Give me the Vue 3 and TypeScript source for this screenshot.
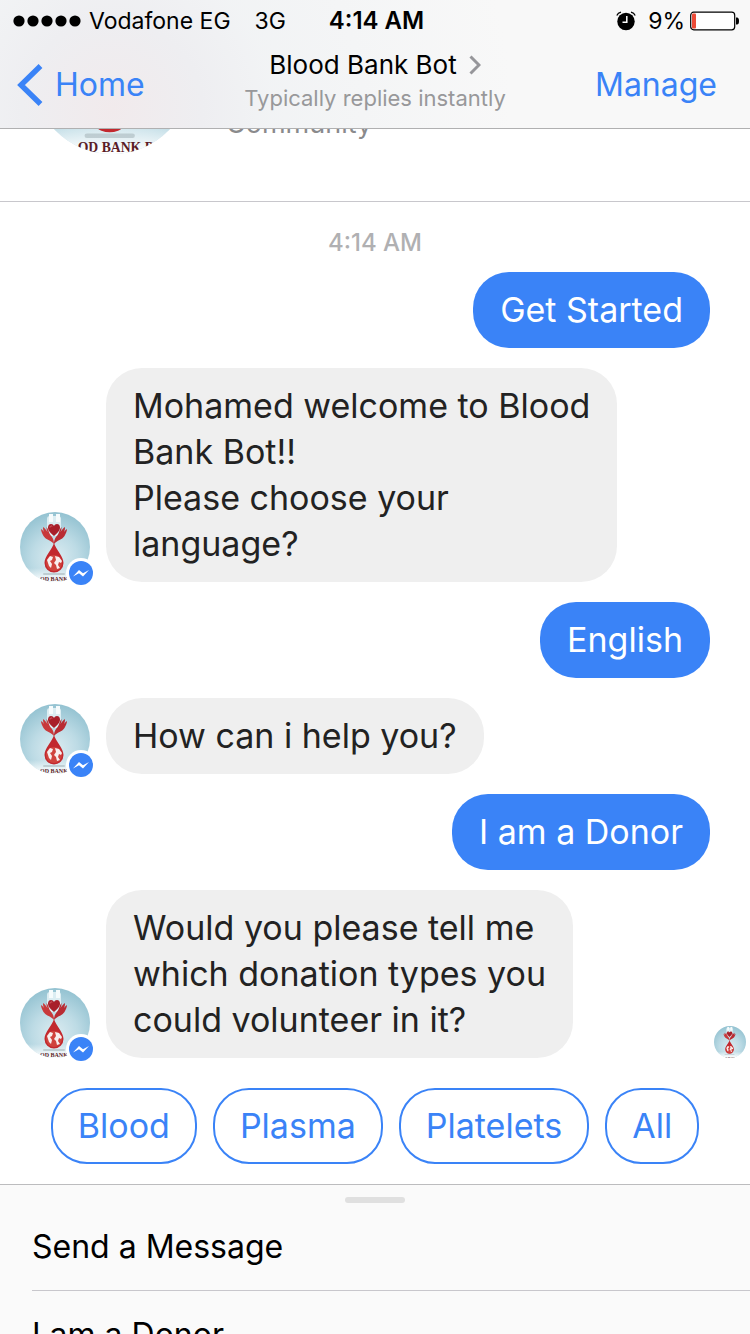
<script setup lang="ts">
import { defineComponent, h } from 'vue'

interface Message {
  id: number
  from: 'me' | 'bot'
  text: string
  seen?: boolean
}

const messages: Message[] = [
  { id: 1, from: 'me', text: 'Get Started' },
  { id: 2, from: 'bot', text: 'Mohamed welcome to Blood\nBank Bot!!\nPlease choose your\nlanguage?' },
  { id: 3, from: 'me', text: 'English' },
  { id: 4, from: 'bot', text: 'How can i help you?' },
  { id: 5, from: 'me', text: 'I am a Donor' },
  { id: 6, from: 'bot', text: 'Would you please tell me\nwhich donation types you\ncould volunteer in it?', seen: true },
]

const replies: string[] = ['Blood', 'Plasma', 'Platelets', 'All']
const menu: string[] = ['Send a Message', 'I am a Donor']

/* Round page picture: a heart held by two hands over a globe in a drop of blood. */
const hand =
  'M34 32 C31 28 26 28 23.500 24 C22 21 21 19 21 17 C23 18 24 20 25.500 22 C23 19 23 17 23 15 C25 16 26 18 27.500 20 C26.500 18 26.500 16 26.500 15 C28.500 17 28.500 20 30 22.500 C32 25 34 27 34 32 Z'

const BotAvatar = defineComponent({
  props: { uid: { type: String, required: true } },
  setup(props) {
    return () =>
      h('svg', { viewBox: '0 0 70 70', role: 'img', 'aria-label': 'Blood Bank Bot' }, [
        h('defs', [
          h('clipPath', { id: `c-${props.uid}` }, [h('circle', { cx: 35, cy: 35, r: 35 })]),
          h('radialGradient', { id: `g-${props.uid}`, cx: '0.5', cy: '0.65', r: '0.65' }, [
            h('stop', { offset: '0', 'stop-color': '#dcecf1' }),
            h('stop', { offset: '0.5', 'stop-color': '#bddbe5' }),
            h('stop', { offset: '1', 'stop-color': '#93c2d1' }),
          ]),
          h('linearGradient', { id: `f-${props.uid}`, x1: 0, y1: 0, x2: 0, y2: 1 }, [
            h('stop', { offset: '0', 'stop-color': '#ffffff', 'stop-opacity': 0 }),
            h('stop', { offset: '0.9', 'stop-color': '#ffffff' }),
          ]),
        ]),
        h('g', { 'clip-path': `url(#c-${props.uid})` }, [
          h('rect', { width: 70, height: 70, fill: `url(#g-${props.uid})` }),
          h('rect', { y: 56, width: 70, height: 14, fill: `url(#f-${props.uid})` }),
          h('rect', { x: 27, y: 4, width: 14, height: 20, rx: 3, fill: '#dcedf2' }),
          h('path', { d: 'M29 2h4v8h-4z M36 2h4v8h-4z', fill: '#f6fbfc' }),
          h('path', { d: hand, fill: '#c8393b' }),
          h('path', { d: hand, fill: '#b92c33', transform: 'matrix(-1 0 0 1 68 0)' }),
          h('path', {
            d: 'M34 24 C31 21 28 19 28 15.500 C28 11 33 11 34 14 C35 11 40 11 40 15.500 C40 19 37 21 34 24 Z',
            fill: '#a81f2a',
          }),
          h('path', { d: 'M30 15.500 C30 13.500 32 13.500 32 14.500', stroke: '#d9666a', fill: 'none' }),
          h('rect', { x: 23, y: 61, width: 22, height: 2, rx: 1, fill: '#a9b8bd', opacity: 0.6 }),
          h('path', {
            d: 'M34 31 C36 38 43.500 44 43.500 51 A9.500 9.500 0 0 1 24.500 51 C24.500 44 32 38 34 31 Z',
            fill: '#c2282e',
          }),
          h('circle', { cx: 34, cy: 51, r: 8, fill: '#d0433d' }),
          h('path', {
            d: 'M27 48 L30 44 L33 45 L32 48 L30 49 L32 52 L31 56 L29 54 L28 51 Z M35 44 L39 45 L42 49 L41 51 L39 50 L38 53 L40 56 L37 57 L36 53 L34 51 L36 48 Z',
            fill: '#f8eeee',
          }),
          h(
            'text',
            {
              x: 20,
              y: 69,
              'font-family': '"Liberation Serif", serif',
              'font-size': 6,
              'font-weight': 700,
              fill: '#5a1c26',
            },
            'OD BANK B',
          ),
        ]),
      ])
  },
})
</script>

<template>
  <div class="phone">
    <header class="top">
      <div class="status">
        <div class="status-left">
          <svg class="dots" viewBox="0 0 68 12" aria-hidden="true">
            <circle v-for="n in 5" :key="n" :cx="n * 14 - 8" cy="6" r="5.6" />
          </svg>
          <span>Vodafone EG</span>
          <span class="net">3G</span>
        </div>
        <strong class="clock">4:14 AM</strong>
        <div class="status-right">
          <svg class="alarm" viewBox="0 0 20 20" aria-hidden="true">
            <circle cx="10" cy="10.500" r="8.700" />
            <path d="M.800 4.500 Q2 2 5 1.200 M19.200 4.500 Q18 2 15 1.200" fill="none" stroke="#000" stroke-width="1.300" />
            <path d="M10.800 5 V11.200 H6.500" fill="none" stroke="#fff" stroke-width="1.500" />
          </svg>
          <span>9%</span>
          <svg class="battery" viewBox="0 0 50 20" aria-hidden="true">
            <rect x="0.700" y="1.200" width="44" height="17.600" rx="3" fill="#fff" stroke="#000" stroke-width="1.200" />
            <rect x="2" y="2.500" width="4" height="15" rx="1" fill="#ec4b37" />
            <path d="M46 6.500h1q2 0 2 3.500t-2 3.500h-1z" />
          </svg>
        </div>
      </div>
      <nav class="nav">
        <button class="link back" type="button">
          <svg viewBox="0 0 26 42" aria-hidden="true">
            <path d="M23.500 2 L4 21 L23.500 40" fill="none" stroke="currentColor" stroke-width="5.400" />
          </svg>
          Home
        </button>
        <div class="heading">
          <h1 class="title">
            Blood Bank Bot
            <svg viewBox="0 0 12 20" aria-hidden="true">
              <path d="M1.500 1.500 L10 10 L1.500 18.500" fill="none" stroke="#96969a" stroke-width="3" />
            </svg>
          </h1>
          <p class="subtitle">Typically replies instantly</p>
        </div>
        <button class="link manage" type="button">Manage</button>
      </nav>
    </header>

    <section class="profile">
      <BotAvatar class="profile-pic" uid="profile" />
      <p class="category">Community</p>
    </section>

    <main class="chat">
      <time class="stamp">4:14 AM</time>
      <div v-for="m in messages" :key="m.id" class="row" :class="m.from">
        <div v-if="m.from === 'bot'" class="sender">
          <BotAvatar class="sender-pic" :uid="`m${m.id}`" />
          <svg class="badge" viewBox="0 0 30 30" aria-hidden="true">
            <circle cx="15" cy="15" r="15" fill="#fff" />
            <circle cx="15" cy="15" r="12" fill="#3a83f7" />
            <path d="M7 18.500 L13 12 L17 15.300 L23 12 L17 18.500 L13 15.300 Z" fill="#fff" />
          </svg>
        </div>
        <p class="bubble">{{ m.text }}</p>
        <BotAvatar v-if="m.seen" class="seen" uid="seen" />
      </div>
      <div class="replies">
        <button v-for="r in replies" :key="r" class="chip" type="button">{{ r }}</button>
      </div>
    </main>

    <footer class="sheet">
      <div class="grip"></div>
      <button v-for="item in menu" :key="item" class="item" type="button">{{ item }}</button>
    </footer>
  </div>
</template>

<style>
body {
  margin: 0;
  background: #fff;
}
</style>

<style scoped>
.phone {
  height: 100vh;
  display: flex;
  flex-direction: column;
  overflow: hidden;
  background: #fff;
  color: #000;
  font-family: Inter, "Liberation Sans", sans-serif;
}
.phone > * {
  flex-shrink: 0;
}
p,
h1 {
  margin: 0;
  font-weight: 400;
}
button {
  margin: 0;
  padding: 0;
  border: 0;
  background: none;
  font: inherit;
  color: inherit;
}
svg {
  display: block;
  flex-shrink: 0;
}

.top {
  border-bottom: 1px solid #b0b0b1;
  background:
    radial-gradient(circle at 112px 110px, #f1eaec 0, #eeeef1 90px, rgba(240, 242, 244, 0.8) 160px, rgba(248, 248, 248, 0) 400px),
    #f8f8f8;
}
.status {
  display: grid;
  grid-template-columns: 1fr auto 1fr;
  align-items: center;
  height: 41px;
  padding: 0 10px 0 13px;
  font-size: 23px;
}
.status-left,
.status-right {
  display: flex;
  align-items: center;
}
.status-right {
  justify-content: flex-end;
}
.dots {
  width: 68px;
  height: 12px;
  margin-right: 8px;
}
.net {
  margin-left: 24px;
}
.clock {
  font-size: 24px;
  font-weight: 600;
}
.alarm {
  width: 20px;
  height: 20px;
  margin-right: 12px;
}
.battery {
  width: 50px;
  height: 20px;
  margin-left: 5px;
}
.nav {
  display: grid;
  grid-template-columns: 1fr auto 1fr;
  align-items: center;
  height: 87px;
  padding: 0 33px 0 17px;
}
.link {
  color: #3a83f7;
  font-size: 32px;
}
.back {
  display: flex;
  align-items: center;
  gap: 12px;
  justify-self: start;
}
.back svg {
  width: 26px;
  height: 42px;
}
.manage {
  justify-self: end;
}
.heading {
  padding: 0 0 8px 16px;
  text-align: center;
}
.title {
  display: flex;
  align-items: center;
  justify-content: center;
  gap: 12px;
  font-size: 26px;
  line-height: 34px;
}
.title svg {
  width: 12px;
  height: 20px;
}
.subtitle {
  color: #98989a;
  font-size: 22px;
  line-height: 32px;
}

.profile {
  display: flex;
  align-items: flex-end;
  gap: 34px;
  height: 72px;
  padding: 0 32px;
  overflow: hidden;
  border-bottom: 1px solid #c8c7cc;
}
.profile-pic {
  width: 160px;
  height: 160px;
  margin-bottom: 47px;
}
.category {
  margin-bottom: 60px;
  color: #8a8a8c;
  font-size: 27px;
  line-height: 34px;
}

.chat {
  display: flex;
  flex-direction: column;
  gap: 20px;
  padding: 32px 40px 20px 20px;
}
.stamp {
  margin-right: -20px;
  color: #b0b0b2;
  font-size: 24px;
  line-height: 18px;
  font-weight: 500;
  text-align: center;
}
.row {
  position: relative;
  display: flex;
  align-items: flex-end;
  gap: 16px;
}
.me {
  justify-content: flex-end;
}
.bubble {
  padding: 15px 27px;
  border-radius: 36px;
  background: #efefef;
  color: #222;
  font-size: 34px;
  line-height: 46px;
  white-space: pre-line;
}
.me .bubble {
  background: #3a83f7;
  color: #fff;
}
.sender {
  position: relative;
}
.sender-pic {
  width: 70px;
  height: 70px;
}
.badge {
  position: absolute;
  right: -6px;
  bottom: -6px;
  width: 30px;
  height: 30px;
}
.seen {
  position: absolute;
  right: -36px;
  bottom: 0;
  width: 32px;
  height: 32px;
}
.replies {
  display: flex;
  justify-content: center;
  gap: 16px;
  margin-top: 10px;
  margin-right: -20px;
}
.chip {
  padding: 13px 25px;
  border: 2px solid #3a83f7;
  border-radius: 36px;
  color: #3a83f7;
  font-size: 34px;
  line-height: 46px;
}

.sheet {
  display: flex;
  flex-direction: column;
  border-top: 1px solid #bcbcbe;
  background: #fafafa;
}
.grip {
  align-self: center;
  width: 60px;
  height: 6px;
  margin-top: 12px;
  border-radius: 3px;
  background: #e0e0e0;
}
.item {
  height: 88px;
  margin-left: 32px;
  border-bottom: 1px solid #c8c7cc;
  font-size: 32px;
  text-align: left;
}
</style>
